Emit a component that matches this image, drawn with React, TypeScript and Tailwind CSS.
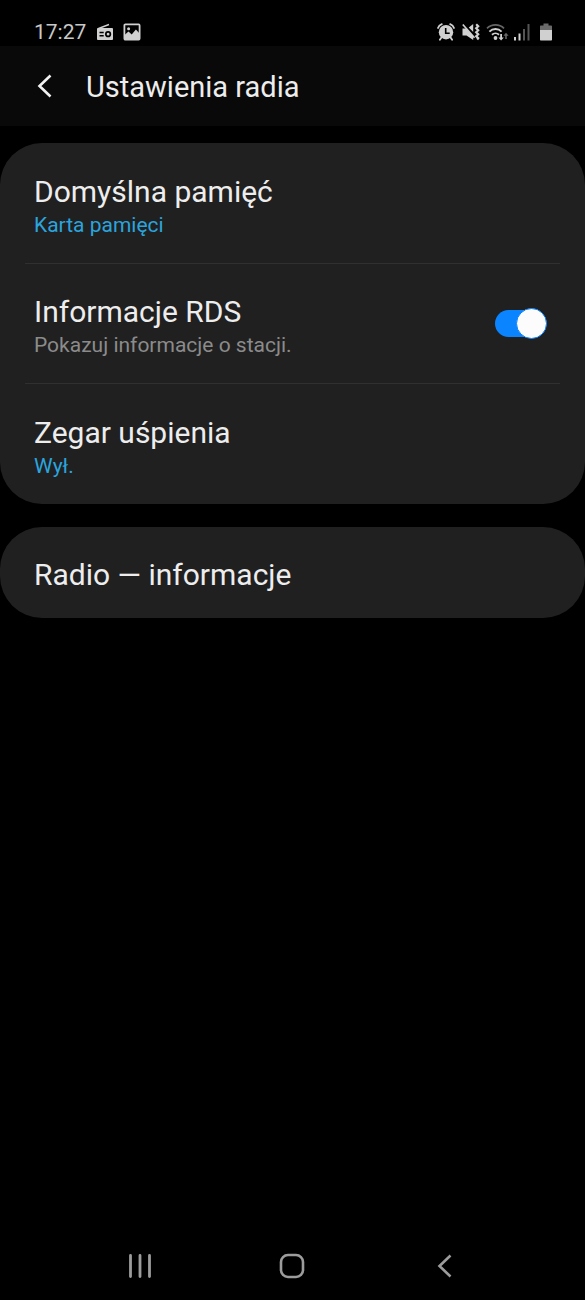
import { useId, useState } from "react";
import type { ReactNode } from "react";

interface SettingRowProps {
  title: string;
  value: string;
}

function StatusBar() {
  return (
    <div className="flex h-[46px] items-center justify-between bg-black pt-[17px] pr-[33px] pl-[34px] text-[#d0d0d0]">
      <div className="flex items-center">
        <span className="text-[21px] leading-7 text-[#c8c8c8]">17:27</span>
        <svg width="18" height="18" viewBox="0 0 18 18" className="ml-2.5" aria-hidden="true">
          <path d="M2.5 5.5 13 1.5" stroke="currentColor" strokeWidth="1.4" />
          <path
            fill="currentColor"
            fillRule="evenodd"
            d="M2.2 5h13.6c.8 0 1.2.4 1.2 1.2v9.600c0 .8-.4 1.2-1.2 1.2H2.2c-.8 0-1.2-.4-1.2-1.2V6.2C1 5.4 1.4 5 2.2 5ZM3.5 8.7v1.600h4.2V8.7H3.5Zm0 3.3v1.600h4.2V12H3.5Zm8.600-3.9a3.1 3.1 0 1 0 0 6.2 3.1 3.1 0 0 0 0-6.2Zm0 1.7a1.4 1.4 0 1 1 0 2.8 1.4 1.4 0 0 1 0-2.8Z"
          />
        </svg>
        <svg width="18" height="18" viewBox="0 0 18 18" className="ml-[9px]" aria-hidden="true">
          <rect x="1.4" y="1.4" width="15.2" height="15.2" rx="1" fill="none" stroke="currentColor" strokeWidth="1.8" />
          <circle cx="5.6" cy="5.8" r="1.5" fill="currentColor" />
          <path fill="currentColor" d="M1.5 12 5.5 8.500l3.2 3 4.2-5 3.700 4v6H1.5Z" />
        </svg>
      </div>

      <div className="flex items-center">
        {/* alarm */}
        <svg width="18" height="18" viewBox="0 0 18 18" aria-hidden="true">
          <path
            d="M1 5A6 6 0 0 1 4.8 1.100M17 5A6 6 0 0 0 13.200 1.100M4.4 14.5l-1.5 2.300M13.600 14.5l1.500 2.300"
            fill="none"
            stroke="currentColor"
            strokeWidth="1.8"
            strokeLinecap="round"
          />
          <circle cx="9" cy="9.200" r="7.200" fill="currentColor" />
          <path d="M8.700 5v5.200h4" fill="none" stroke="#000" strokeWidth="1.6" />
        </svg>
        {/* muted, vibrating */}
        <svg width="18" height="18" viewBox="0 0 18 18" className="ml-[7px]" aria-hidden="true">
          <path fill="currentColor" d="M.5 5.500h3.500L11.200 12.700V17L4.500 12.500h-4ZM6.800 4.500 11.200 1v8Z" />
          <path d="M.8 1.500 12.500 14.800" stroke="currentColor" strokeWidth="1.7" />
          <path
            d="M14.200 1.200l2 2-2 2 2 2-2 2 2 2-2 2 2 2-1 1.300"
            fill="none"
            stroke="currentColor"
            strokeWidth="2.200"
          />
        </svg>
        {/* wifi with traffic arrows */}
        <svg width="24" height="18" viewBox="0 0 24 18" className="ml-1.5" aria-hidden="true">
          <path d="M1 5.4a12 12 0 0 1 17 0" fill="none" stroke="#666" strokeWidth="1.7" />
          <g fill="none" stroke="currentColor" strokeWidth="1.9">
            <path d="M3.4 8.6a8.6 8.6 0 0 1 12.2 0" />
            <path d="M6 11.8a5 5 0 0 1 7 0" />
          </g>
          <circle cx="9.5" cy="15" r="1.9" fill="currentColor" />
          <path fill="currentColor" d="M14.2 11h1.8v3.4h1.8L15.100 17.600 12.400 14.400h1.800Z" />
          <path fill="#666" d="m20 9.800 2.600 3h-1.800v3.200h-1.600v-3.200h-1.800Z" />
        </svg>
        {/* signal */}
        <svg width="18" height="18" viewBox="0 0 18 18" className="ml-[3px]" aria-hidden="true">
          <path fill="currentColor" d="M1 14h2v3.500H1ZM5.500 10.500h2v7h-2Z" />
          <path fill="#555" d="M10 6h2v11.500h-2ZM14.500 1h2v16.500h-2Z" />
        </svg>
        {/* battery */}
        <svg width="12" height="18" viewBox="0 0 12 18" className="ml-[9px]" aria-hidden="true">
          <path fill="#6a6a6a" d="M3.500.5h5v2H11c.5 0 1 .4 1 1V7.500H0v-4c0-.6.400-1 1-1h2.500Z" />
          <path fill="currentColor" d="M0 7h12v9.500c0 .6-.4 1-1 1H1c-.6 0-1-.4-1-1Z" />
        </svg>
      </div>
    </div>
  );
}

function Card({ children }: { children: ReactNode }) {
  return <section className="rounded-[42px] bg-[#202020]">{children}</section>;
}

function Divider() {
  return <div className="mx-[25px] h-px bg-[#303030]" />;
}

function SettingRow({ title, value }: SettingRowProps) {
  return (
    <button type="button" className="block w-full px-[34px] pt-[29px] pb-[25px] text-left">
      <span className="block text-[30px] leading-10 text-[#ededed]">{title}</span>
      <span className="block text-[21px] leading-[26px] text-[#2ba4de]">{value}</span>
    </button>
  );
}

function RdsRow() {
  const [enabled, setEnabled] = useState(true);
  const id = useId();

  return (
    <div className="flex items-center justify-between pr-[39px] pl-[34px]">
      <label htmlFor={id} className="flex-1 pt-7 pb-[25px]">
        <span className="block text-[30px] leading-10 text-[#ededed]">Informacje RDS</span>
        <span className="block text-[21px] leading-[26px] text-[#8b8b8b]">Pokazuj informacje o stacji.</span>
      </label>
      <input
        id={id}
        type="checkbox"
        role="switch"
        checked={enabled}
        onChange={(e) => setEnabled(e.target.checked)}
        className="relative h-[27px] w-[51px] shrink-0 appearance-none rounded-full bg-[#5a5a5a] before:absolute before:-top-0.5 before:-left-px before:size-[31px] before:rounded-full before:border before:border-[#5a5a5a] before:bg-[#fcfcfc] checked:bg-[#0a84ff] checked:before:right-[-1px] checked:before:left-auto checked:before:border-[#0a84ff]"
      />
    </div>
  );
}

function NavigationBar() {
  return (
    <nav className="mt-auto grid h-[68px] grid-cols-3 items-center px-16 text-[#9c9c9c]">
      <button type="button" aria-label="Ostatnie" className="flex justify-center">
        <svg width="26" height="26" viewBox="0 0 26 26" fill="none" stroke="currentColor" strokeWidth="2.8" strokeLinecap="round">
          <path d="M3.500 2.500v21M13 2.500v21M22.500 2.500v21" />
        </svg>
      </button>
      <button type="button" aria-label="Ekran startowy" className="flex justify-center">
        <svg width="26" height="26" viewBox="0 0 26 26" fill="none" stroke="currentColor" strokeWidth="2.600">
          <rect x="2" y="2" width="22" height="22" rx="7" />
        </svg>
      </button>
      <button type="button" aria-label="Wstecz" className="flex justify-center">
        <svg width="26" height="26" viewBox="0 0 26 26" fill="none" stroke="currentColor" strokeWidth="2.600">
          <path d="M18.500 2.500 7.500 13l11 10.500" />
        </svg>
      </button>
    </nav>
  );
}

export default function App() {
  return (
    <div className="flex min-h-screen flex-col bg-black font-['Roboto',sans-serif]">
      <StatusBar />

      <header className="flex h-20 items-center bg-[#090909] pt-0.5 pl-8">
        <button type="button" aria-label="Wróć" className="text-[#f2f2f2]">
          <svg width="26" height="26" viewBox="0 0 26 26" fill="none" stroke="currentColor" strokeWidth="2.600">
            <path d="M18.500 1.500 7.500 12l11 10.500" />
          </svg>
        </button>
        <h1 className="ml-7 text-[29px] leading-10 text-[#ededed]">Ustawienia radia</h1>
      </header>

      <main className="flex flex-col gap-[23px] pt-[17px]">
        <Card>
          <SettingRow title="Domyślna pamięć" value="Karta pamięci" />
          <Divider />
          <RdsRow />
          <Divider />
          <SettingRow title="Zegar uśpienia" value="Wył." />
        </Card>
        <Card>
          <button type="button" className="block w-full px-[34px] pt-7 pb-[23px] text-left text-[30px] leading-10 text-[#ededed]">
            Radio — informacje
          </button>
        </Card>
      </main>

      <NavigationBar />
    </div>
  );
}
